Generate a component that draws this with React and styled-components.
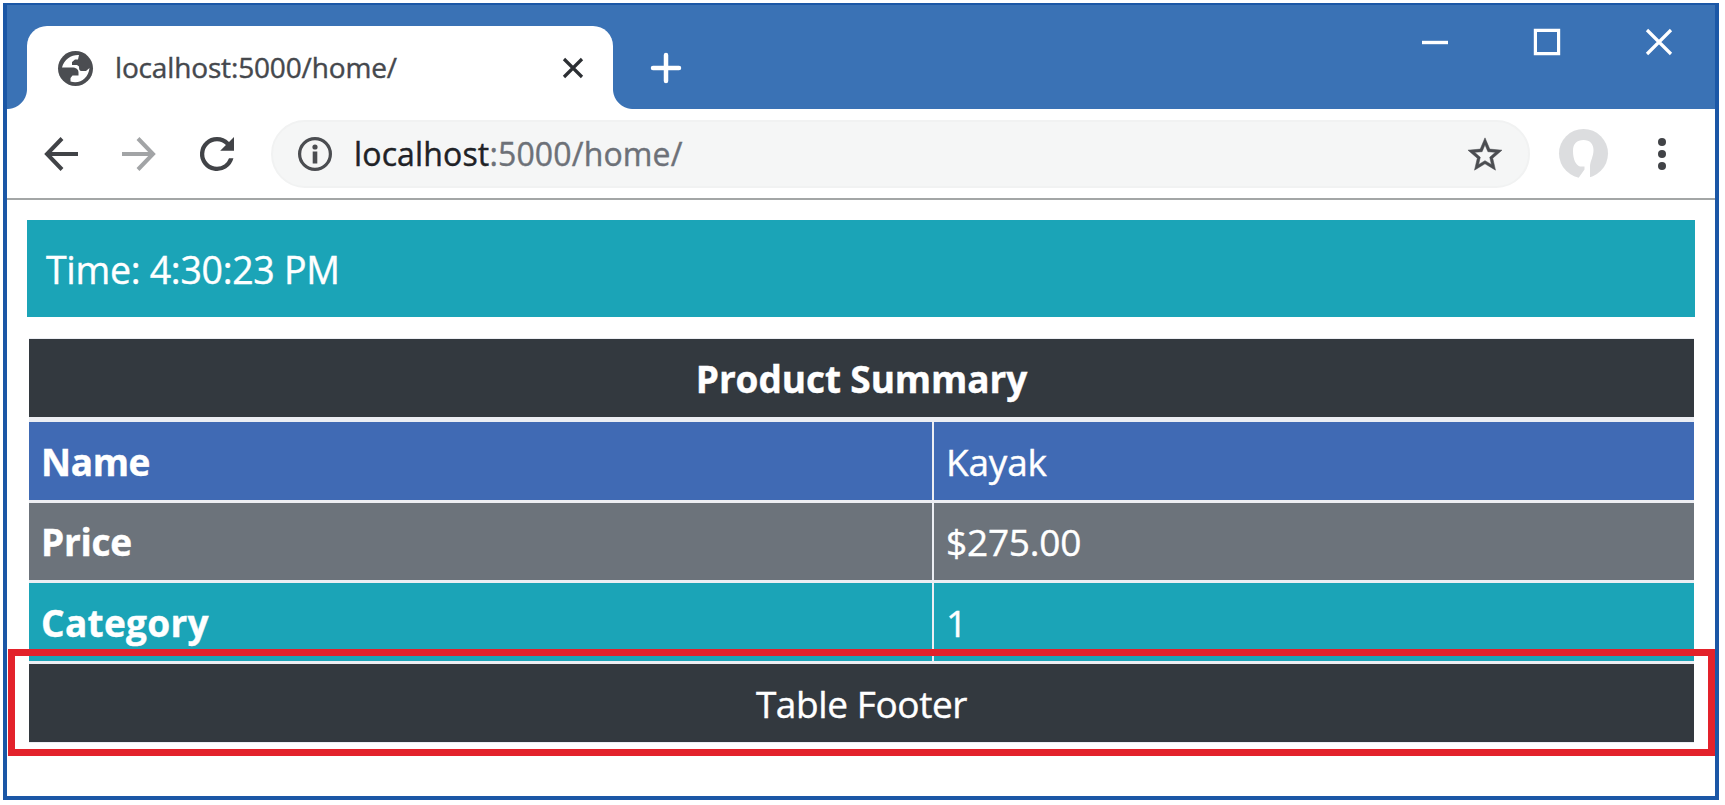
import React from "react";
import styled, { createGlobalStyle } from "styled-components";

const GlobalStyle = createGlobalStyle`
  * { box-sizing: border-box; }
  body { margin: 0; background: #fff; font-family: "Open Sans", "Noto Sans", sans-serif; }
`;

const Page = styled.div`
  width: 1725px;
  height: 805px;
  padding: 3px 6px 5px 3px;
  overflow: hidden;
`;

const Window = styled.div`
  position: relative;
  display: flex;
  flex-direction: column;
  height: 797px;
  border: 4px solid #1b57a6;
  border-top-width: 2px;
  background: #fff;
  -webkit-text-stroke: 0.4px currentColor;
`;

const TitleBar = styled.header`
  display: flex;
  height: 104px;
  padding: 21px 0 0 20px;
  background: #3a72b5;
`;

const Tab = styled.div`
  position: relative;
  display: flex;
  align-items: center;
  width: 586px;
  height: 83px;
  padding: 1px 29px 0 31px;
  border-radius: 20px 20px 0 0;
  background: #fff;

  &::before,
  &::after {
    content: "";
    position: absolute;
    bottom: 0;
    width: 20px;
    height: 20px;
  }
  &::before {
    left: -20px;
    background: radial-gradient(circle at 0 0, transparent 19.5px, #fff 20.5px);
  }
  &::after {
    right: -20px;
    background: radial-gradient(circle at 100% 0, transparent 19.5px, #fff 20.5px);
  }
`;

const TabTitle = styled.span`
  flex: 1;
  margin: 0 0 3px 22px;
  color: #45484d;
  font-size: 28px;
  line-height: 36px;
  letter-spacing: -0.15px;
`;

const Icon = styled.svg`
  display: block;
  flex: none;
  width: ${(p) => p.$w}px;
  height: ${(p) => p.$h || p.$w}px;
  overflow: visible;
`;

const NewTab = styled.div`
  margin: 27px 0 0 38px;
`;

const WindowControls = styled.div`
  display: flex;
  gap: 86px;
  margin: 3px 43px 0 auto;
`;

const Toolbar = styled.nav`
  display: flex;
  align-items: center;
  height: 91px;
  padding: 0 44px 0 37px;
  border-bottom: 2px solid #a3a6a6;
`;

const NavButtons = styled.div`
  display: flex;
  gap: 44px;
`;

const AddressBar = styled.div`
  display: flex;
  align-items: center;
  width: 1259px;
  height: 68px;
  margin-left: 37px;
  padding: 0 26px 0 25px;
  border: 2px solid #f1f2f2;
  border-radius: 34px;
  background: #f5f6f6;
`;

const Url = styled.span`
  flex: 1;
  margin-left: 22px;
  color: #6d7178;
  font-size: 32px;
  line-height: 44px;
  letter-spacing: 0.15px;
`;

const Host = styled.span`
  color: #202226;
`;

const Avatar = styled.div`
  margin: 0 50px 0 29px;
`;

const Content = styled.main`
  padding: 20px 20px 0;
`;

const TimeBanner = styled.div`
  display: flex;
  align-items: center;
  height: 97px;
  padding: 1px 19px 0;
  background: #1ba4b7;
  color: #fff;
  font-size: 37.5px;
  letter-spacing: -0.3px;
`;

const Table = styled.div`
  display: flex;
  flex-direction: column;
  gap: 3px;
  margin: 21px 1px 0 2px;
  padding: 1px 0;
  background: #eceef3;
`;

const Row = styled.div`
  display: grid;
  grid-template-columns: ${(p) => (p.$span ? "1fr" : "903px 1fr")};
  gap: 2px;
  height: ${(p) => p.$h || 77.5}px;
  margin-bottom: ${(p) => p.$after || 0}px;
`;

const Cell = styled.div`
  display: flex;
  align-items: center;
  justify-content: ${(p) => (p.$center ? "center" : "flex-start")};
  padding: 1px 12px 0;
  background: ${(p) => p.$bg};
  color: #fff;
  font-size: 37px;
  font-weight: ${(p) => (p.$bold ? 700 : 400)};
  letter-spacing: ${(p) => p.$ls || 0}px;
`;

const Highlight = styled.div`
  position: absolute;
  left: 1px;
  top: 644px;
  width: 1707px;
  height: 107px;
  border: 7px solid #e3222b;
`;

const rows = [
  { name: "Name", value: "Kayak", bg: "#406ab4", ls: -0.4 },
  { name: "Price", value: "$275.00", bg: "#6c737b", ls: -0.3 },
  { name: "Category", value: "1", bg: "#1ba4b7", ls: 0.3 },
];

const DARK = "#33393f";

export default function App() {
  return (
    <Page>
      <GlobalStyle />
      <Window>
        <TitleBar>
          <Tab>
            <Icon $w={35} viewBox="0 0 35 35">
              <circle cx="17.5" cy="17.5" r="17.5" fill="#4b4d51" />
              <path
                d="M21 4C14 3.500 6 8 4 16.500H14C18 16.500 20.500 18 20.500 21.500V24.500H14.500L12.500 27V30.500C22 33.500 30.500 27 31.500 17L28 20H23.500C21.500 20 21 18.500 21 15.500L19 14H14V11L17 8.500H20Z"
                fill="#fff"
              />
            </Icon>
            <TabTitle>localhost:5000/home/</TabTitle>
            <Icon $w={22} viewBox="0 0 22 22" stroke="#2c2f33" strokeWidth="3.2">
              <path d="M2 2 20 20M20 2 2 20" />
            </Icon>
          </Tab>
          <NewTab>
            <Icon $w={30} viewBox="0 0 30 30" stroke="#fff" strokeWidth="4.5" strokeLinecap="round">
              <path d="M15 2V28M2 15H28" />
            </Icon>
          </NewTab>
          <WindowControls>
            <Icon $w={26} viewBox="0 0 26 26" stroke="#fff" strokeWidth="3.4">
              <path d="M0 13.500H26" />
            </Icon>
            <Icon $w={26} viewBox="0 0 26 26" stroke="#fff" strokeWidth="3.2" fill="none">
              <path d="M1.400 1.400H24.600V24.600H1.400Z" />
            </Icon>
            <Icon $w={26} viewBox="0 0 26 26" stroke="#fff" strokeWidth="3.2">
              <path d="M1 1 25 25M25 1 1 25" />
            </Icon>
          </WindowControls>
        </TitleBar>
        <Toolbar>
          <NavButtons>
            <Icon $w={34} viewBox="0 0 34 34" stroke="#414347" strokeWidth="4" fill="none">
              <path d="M34 17H3M18 1.500 3 17 18 32.500" />
            </Icon>
            <Icon $w={34} viewBox="0 0 34 34" stroke="#a2a4a6" strokeWidth="4" fill="none">
              <path d="M0 17H30M16 1.500 31 17 16 32.500" />
            </Icon>
            <Icon $w={34} viewBox="4 4 16 16" fill="#414347">
              <path d="M17.650 6.350A7.958 7.958 0 0 0 12 4a8 8 0 1 0 7.730 10h-2.080A5.990 5.990 0 0 1 12 18a6 6 0 1 1 0-12c1.660 0 3.140.690 4.220 1.780L13.500 10.500h6.500V4l-2.350 2.350z" />
            </Icon>
          </NavButtons>
          <AddressBar>
            <Icon $w={34} viewBox="0 0 34 34" fill="#4b4d51">
              <circle cx="17" cy="17" r="15.4" fill="none" stroke="#4b4d51" strokeWidth="3.2" />
              <circle cx="17" cy="10" r="2.6" />
              <path d="M14.700 14.500h4.600v12h-4.600z" />
            </Icon>
            <Url>
              <Host>localhost</Host>:5000/home/
            </Url>
            <Icon $w={34} viewBox="2 2 20 19" fill="#4b4d51" stroke="#4b4d51" strokeWidth="0.3">
              <path d="M22 9.240l-7.190-.620L12 2 9.190 8.630 2 9.240l5.460 4.730L5.820 21 12 17.270 18.180 21l-1.630-7.030L22 9.240zM12 15.400l-3.760 2.270 1-4.280-3.320-2.880 4.380-.380L12 6.100l1.710 4.040 4.380.380-3.320 2.880 1 4.280L12 15.400z" />
            </Icon>
          </AddressBar>
          <Avatar>
            <Icon $w={49} viewBox="0 0 49 49">
              <circle cx="24.5" cy="24.5" r="24.5" fill="#dcdddf" />
              <path d="M14 22C14 14.500 18 11 24.500 11S34.500 15 34.500 21C34.500 28 31 32 31 38V49H19.500L25.500 40.500V37.500H21C16.500 36 14 30 14 22Z" fill="#fff" />
            </Icon>
          </Avatar>
          <Icon $w={8} $h={34} viewBox="0 0 8 34" fill="#414347">
            <circle cx="4" cy="5" r="4" />
            <circle cx="4" cy="17" r="4" />
            <circle cx="4" cy="29" r="4" />
          </Icon>
        </Toolbar>
        <Content>
          <TimeBanner>Time: 4:30:23 PM</TimeBanner>
          <Table>
            <Row $span $h={78} $after={2}>
              <Cell $bg={DARK} $bold $center $ls={-0.1}>Product Summary</Cell>
            </Row>
            {rows.map((r) => (
              <Row key={r.name}>
                <Cell $bg={r.bg} $bold $ls={r.ls}>{r.name}</Cell>
                <Cell $bg={r.bg} $ls={-0.2}>{r.value}</Cell>
              </Row>
            ))}
            <Row $span $h={78}>
              <Cell $bg={DARK} $center $ls={-0.4}>Table Footer</Cell>
            </Row>
          </Table>
        </Content>
        <Highlight />
      </Window>
    </Page>
  );
}
